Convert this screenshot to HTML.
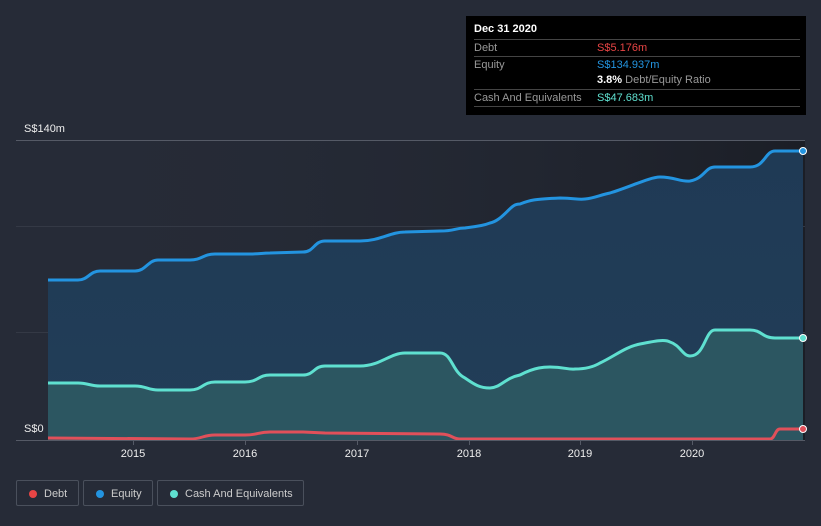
<!DOCTYPE html>
<html><head><style>
body{margin:0;width:821px;height:526px;background:#262b37;font-family:"Liberation Sans",sans-serif;overflow:hidden;position:relative}
.tt{position:absolute;left:466px;top:16px;width:340px;height:99px;background:#000;color:#fff;font-size:11px}
.tt .r{position:absolute;left:8px;width:326px;border-top:1px solid #444;height:16px;line-height:16px;color:#999}
.tt .v{position:absolute;left:123px}
.lg{position:absolute;top:480px;height:26px;border:1px solid #4a505c;border-radius:2px;color:#ccc;font-size:11px;line-height:26px;box-sizing:border-box}
.lg i{position:absolute;left:12px;top:9px;width:8px;height:8px;border-radius:50%}
.lg span{position:absolute;left:27px}
</style></head><body>
<svg width="821" height="526" style="position:absolute;left:0;top:0">
<defs>
<linearGradient id="bg" x1="0" y1="0" x2="1" y2="0"><stop offset="0" stop-color="#262b37" stop-opacity="0"/><stop offset="1" stop-color="#1b1e26"/></linearGradient>
<linearGradient id="eq" x1="0" y1="0" x2="0" y2="1"><stop offset="0" stop-color="#1f3a55"/><stop offset="1" stop-color="#223e58"/></linearGradient>
</defs>
<rect x="48" y="140" width="757" height="300" fill="url(#bg)"/>
<line x1="16" y1="140.5" x2="805" y2="140.5" stroke="#555a66"/>
<line x1="16" y1="226.5" x2="805" y2="226.5" stroke="#343945"/>
<line x1="16" y1="332.5" x2="805" y2="332.5" stroke="#343945"/>
<path d="M48,280 L78,280 C88,280 90,271 100,271 L135,271 C146,271 148,260 158,260 L190,260 C202,260 203,254 215,254 L250,254 C260,254 262,253 270,253 L303,252 C314,252 314,241 325,241 L360,241 C380,241 390,232 405,232 L440,231 C455,231 455,228 465,228 C480,226 485,225 490,223 C495,222 497,220 500,218 C510,210 512,204 520,204 C530,200 535,199 560,198 C575,198 578,200 585,199 C595,198 600,195 610,193 C630,187 650,177 660,177 C675,177 680,182 690,181 C705,178 705,167 715,167 L750,167 C765,167 765,151 775,151 L803,151 L803,440 L48,440 Z" fill="url(#eq)"/>
<path d="M48,383 L78,383 C88,383 90,386 100,386 L135,386 C146,386 148,390 158,390 L190,390 C202,390 203,382 215,382 L245,382 C258,382 258,375 270,375 L303,375 C314,375 314,366 325,366 L360,366 C380,366 390,353 405,353 L440,353 C452,353 452,372 465,378 C475,385 480,388 490,388 C500,388 505,378 520,375 C535,367 545,367 550,367 C565,367 568,370 575,369 C588,369 595,366 600,363 C615,356 625,347 640,344 C655,341 665,339 670,342 C680,345 683,356 690,356 C705,356 705,330 715,330 L750,330 C762,330 762,338 775,338 L803,338 L803,440 L48,440 Z" fill="#2e5a63" opacity="0.85"/>
<path d="M48,280 L78,280 C88,280 90,271 100,271 L135,271 C146,271 148,260 158,260 L190,260 C202,260 203,254 215,254 L250,254 C260,254 262,253 270,253 L303,252 C314,252 314,241 325,241 L360,241 C380,241 390,232 405,232 L440,231 C455,231 455,228 465,228 C480,226 485,225 490,223 C495,222 497,220 500,218 C510,210 512,204 520,204 C530,200 535,199 560,198 C575,198 578,200 585,199 C595,198 600,195 610,193 C630,187 650,177 660,177 C675,177 680,182 690,181 C705,178 705,167 715,167 L750,167 C765,167 765,151 775,151 L803,151" fill="none" stroke="#2394e0" stroke-width="3"/>
<path d="M48,383 L78,383 C88,383 90,386 100,386 L135,386 C146,386 148,390 158,390 L190,390 C202,390 203,382 215,382 L245,382 C258,382 258,375 270,375 L303,375 C314,375 314,366 325,366 L360,366 C380,366 390,353 405,353 L440,353 C452,353 452,372 465,378 C475,385 480,388 490,388 C500,388 505,378 520,375 C535,367 545,367 550,367 C565,367 568,370 575,369 C588,369 595,366 600,363 C615,356 625,347 640,344 C655,341 665,339 670,342 C680,345 683,356 690,356 C705,356 705,330 715,330 L750,330 C762,330 762,338 775,338 L803,338" fill="none" stroke="#5fe0d0" stroke-width="3"/>
<path d="M48,438 L190,439 C202,439 203,435 215,435 L245,435 C258,435 258,432 270,432 L303,432 L325,433 L440,434 C452,434 452,439 460,439 L770,439 C775,439 775,429 780,429 L803,429" fill="none" stroke="#e0505a" stroke-width="3"/>
<line x1="16" y1="440.5" x2="805" y2="440.5" stroke="#555a66"/>
<g stroke="#555a66"><line x1="133.5" y1="441" x2="133.5" y2="445"/><line x1="245.5" y1="441" x2="245.5" y2="445"/><line x1="357.5" y1="441" x2="357.5" y2="445"/><line x1="469.5" y1="441" x2="469.5" y2="445"/><line x1="580.5" y1="441" x2="580.5" y2="445"/><line x1="692.5" y1="441" x2="692.5" y2="445"/></g>
<circle cx="803" cy="151" r="3.5" fill="#2394e0" stroke="#fff" stroke-width="1"/>
<circle cx="803" cy="338" r="3.5" fill="#5fe0d0" stroke="#fff" stroke-width="1"/>
<circle cx="803" cy="429" r="3.5" fill="#e0505a" stroke="#fff" stroke-width="1"/>
<g fill="#eee" font-size="11" font-family="Liberation Sans,sans-serif">
<text x="24" y="132">S$140m</text><text x="24" y="432">S$0</text>
<g text-anchor="middle"><text x="133" y="457">2015</text><text x="245" y="457">2016</text><text x="357" y="457">2017</text><text x="469" y="457">2018</text><text x="580" y="457">2019</text><text x="692" y="457">2020</text></g>
</g>
</svg>
<div class="tt">
<div style="position:absolute;left:8px;top:7px;font-weight:bold">Dec 31 2020</div>
<div class="r" style="top:23px">Debt<span class="v" style="color:#e84545">S$5.176m</span></div>
<div class="r" style="top:40px">Equity<span class="v" style="color:#2394e0">S$134.937m</span></div>
<div class="r" style="top:56px;border-top:none"><span class="v"><b style="color:#fff">3.8%</b> Debt/Equity Ratio</span></div>
<div class="r" style="top:73px;border-bottom:1px solid #444">Cash And Equivalents<span class="v" style="color:#5fe0d0">S$47.683m</span></div>
</div>
<div class="lg" style="left:16px;width:63px"><i style="background:#e84545"></i><span>Debt</span></div>
<div class="lg" style="left:83px;width:70px"><i style="background:#2394e0"></i><span>Equity</span></div>
<div class="lg" style="left:157px;width:147px"><i style="background:#5fe0d0"></i><span>Cash And Equivalents</span></div>
</body></html>
